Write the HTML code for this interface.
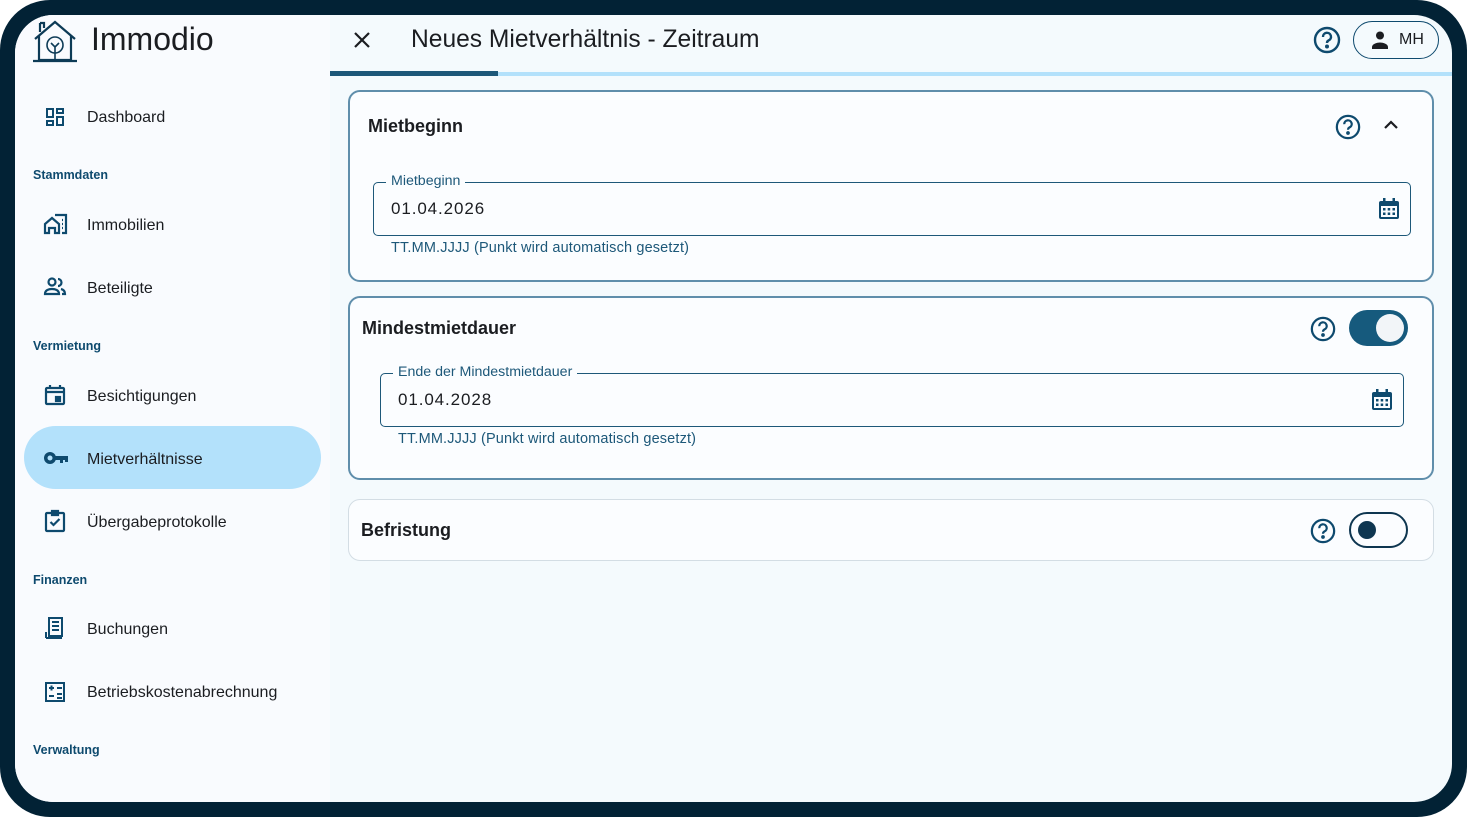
<!DOCTYPE html>
<html><head><meta charset="utf-8"><style>
*{box-sizing:border-box;margin:0;padding:0}
body{width:1467px;height:817px;background:#fff;font-family:"Liberation Sans",Arial,sans-serif;overflow:hidden;position:relative}
.frame{position:absolute;left:0;top:0;width:1467px;height:817px;background:#022235;border-radius:50px}
.screen{position:absolute;left:15px;top:15px;width:1437px;height:787px;border-radius:38px;overflow:hidden;background:#f4fafd}
.side{position:absolute;left:0;top:0;width:315px;height:787px;background:#f9fbfe}
.abs{position:absolute}
.nav{position:absolute;left:72px;font-size:16px;color:#1b1d21;margin-top:2px}
.sec{position:absolute;left:18px;font-size:12.5px;font-weight:bold;color:#0e4a6e}
.ic{position:absolute;left:28px}
.card{position:absolute;left:333px;width:1086px;border:2px solid #5f8eab;border-radius:12px;background:#fbfdff}
.h{position:absolute;font-size:18px;font-weight:bold;color:#1b1d21}
.field{position:absolute;border:1.5px solid #1d5879;border-radius:5px;height:54px}
.field .lab{position:absolute;top:-10px;left:12px;background:#fbfdff;padding:0 5px;font-size:14.2px;color:#1d5879}
.field .val{position:absolute;left:17px;top:16px;font-size:17px;color:#1b1d21;letter-spacing:.9px}
.hint{position:absolute;font-size:14.5px;color:#1d5879;letter-spacing:.15px}
</style></head><body>
<div class="frame"></div>
<div class="screen">
 <div class="side">
  <svg class="abs" style="left:16px;top:2px" width="48" height="46" viewBox="0 0 48 46" fill="none" stroke="#0d3b56" stroke-width="2.2">
   <path d="M4 22 L24 5 L44 22"/><path d="M9 6v9"/><path d="M9 6h4v5"/><path d="M8 19v24h32V19"/><path d="M2 44h44"/>
   <circle cx="24" cy="28" r="8" stroke-width="1.6"/><path d="M24 44V30M20 26l4 4 4-4" stroke-width="1.6"/>
  </svg>
  <div class="abs" style="left:76px;top:6px;font-size:32px;color:#1b1d21">Immodio</div>

  <svg class="ic" style="top:90px" width="24" height="24" viewBox="0 0 24 24" fill="#0e4a6e"><path d="M3 3h8v10H3zm2 2v6h4V5zm8-2h8v6h-8zm2 2v2h4V5zM13 11h8v10h-8zm2 2v6h4v-6zM3 15h8v6H3zm2 2v2h4v-2z"/></svg>
  <div class="nav" style="top:92px">Dashboard</div>
  <div class="sec" style="top:153px">Stammdaten</div>
  <svg class="ic" style="top:197px" width="26" height="24" viewBox="0 0 26 24" fill="none" stroke="#0e4a6e" stroke-width="2.2"><path d="M2 21V12l7-6 7 6v9h-4v-5H6v5z"/><path d="M12 3h11v18h-4"/><path d="M19 8h1M19 12h1M19 16h1"/></svg>
  <div class="nav" style="top:200px">Immobilien</div>
  <svg class="ic" style="top:261px" width="24" height="22" viewBox="0 0 24 22" fill="none" stroke="#0e4a6e" stroke-width="2.2"><circle cx="9" cy="6" r="3.5"/><path d="M2 18c0-4 4-5 7-5s7 1 7 5z"/><path d="M15 3a3.5 3.5 0 0 1 0 7M18 13c2 .5 4 2 4 5h-3"/></svg>
  <div class="nav" style="top:263px">Beteiligte</div>
  <div class="sec" style="top:324px">Vermietung</div>
  <svg class="ic" style="top:368px" width="24" height="24" viewBox="0 0 24 24" fill="none" stroke="#0e4a6e" stroke-width="2.2"><rect x="3" y="5" width="18" height="16" rx="1"/><path d="M3 9h18M7 2v4M17 2v4"/><rect x="13" y="14" width="4" height="4" fill="#0e4a6e"/></svg>
  <div class="nav" style="top:371px">Besichtigungen</div>
  <div class="abs" style="left:9px;top:411px;width:297px;height:63px;border-radius:32px;background:#b3e1fb"></div>
  <svg class="ic" style="top:434px" width="26" height="18" viewBox="0 0 26 18" fill="#0e4a6e"><circle cx="7" cy="9" r="6"/><circle cx="7" cy="9" r="2.5" fill="#b3e1fb"/><rect x="11" y="7" width="14" height="4"/><rect x="17" y="9" width="3" height="5"/><rect x="22" y="9" width="3" height="4"/></svg>
  <div class="nav" style="top:434px">Mietverhältnisse</div>
  <svg class="ic" style="top:494px" width="24" height="24" viewBox="0 0 24 24" fill="none" stroke="#0e4a6e" stroke-width="2.2"><rect x="3" y="4" width="18" height="18" rx="1"/><path d="M9 2h6v4H9z" fill="#0e4a6e"/><path d="M7.5 13l3 3 6-6"/></svg>
  <div class="nav" style="top:497px">Übergabeprotokolle</div>
  <div class="sec" style="top:558px">Finanzen</div>
  <svg class="ic" style="top:601px" width="24" height="24" viewBox="0 0 24 24" fill="none" stroke="#0e4a6e" stroke-width="2"><path d="M6 2h13v18H6z"/><path d="M3 22h16M3 16v6M9 6h7M9 10h7M9 14h7"/></svg>
  <div class="nav" style="top:604px">Buchungen</div>
  <svg class="ic" style="top:665px" width="24" height="24" viewBox="0 0 24 24" fill="none" stroke="#0e4a6e" stroke-width="2"><rect x="3" y="3" width="18" height="18"/><path d="M6 8h5M8.5 5.5v5M14 8h5M6 16h5M14 14h5M14 18h5"/></svg>
  <div class="nav" style="top:667px">Betriebskostenabrechnung</div>
  <div class="sec" style="top:728px">Verwaltung</div>
 </div>

 <svg class="abs" style="left:337px;top:15px" width="20" height="20" viewBox="0 0 20 20" stroke="#1b1d21" stroke-width="2.2"><path d="M3 3l14 14M17 3L3 17"/></svg>
 <div class="abs" style="left:396px;top:11px;font-size:24.6px;color:#1b1d21">Neues Mietverhältnis - Zeitraum</div>
 <svg class="abs" style="left:1298px;top:11px" width="28" height="28" viewBox="0 0 28 28" fill="none" stroke="#0e4a6e" stroke-width="2.4"><circle cx="14" cy="14" r="12"/><path d="M10 11a4 4 0 1 1 5.5 3.5c-1 .5-1.5 1.2-1.5 2.5"/><circle cx="14" cy="20.5" r=".8" fill="#0e4a6e"/></svg>
 <div class="abs" style="left:1338px;top:6px;width:86px;height:38px;border:1.5px solid #0e4a6e;border-radius:19px"></div>
 <svg class="abs" style="left:1355px;top:15px" width="20" height="20" viewBox="0 0 20 20" fill="#1b1d21"><circle cx="10" cy="5.5" r="4"/><path d="M2 19v-2c0-3 5-4.5 8-4.5s8 1.5 8 4.5v2z"/></svg>
 <div class="abs" style="left:1384px;top:16px;font-size:16px;color:#1b1d21">MH</div>
 <div class="abs" style="left:315px;top:57px;width:1122px;height:4px;background:#b3e1fb"></div>
 <div class="abs" style="left:315px;top:56px;width:168px;height:5px;background:#1d5879"></div>

 <div class="card" style="top:75px;height:192px">
  <div class="h" style="left:18px;top:24px">Mietbeginn</div>
  <svg class="abs" style="left:985px;top:22px" width="26" height="26" viewBox="0 0 28 28" fill="none" stroke="#0e4a6e" stroke-width="2.4"><circle cx="14" cy="14" r="12"/><path d="M10 11a4 4 0 1 1 5.5 3.5c-1 .5-1.5 1.2-1.5 2.5"/><circle cx="14" cy="20.5" r=".8" fill="#0e4a6e"/></svg>
  <svg class="abs" style="left:1034px;top:28px" width="14" height="10" viewBox="0 0 14 10" fill="none" stroke="#1b1d21" stroke-width="2.2"><path d="M1 8l6-6 6 6"/></svg>
  <div class="field" style="left:23px;top:90px;width:1038px"><span class="lab">Mietbeginn</span><span class="val">01.04.2026</span>
   <svg class="abs" style="right:10px;top:15px" width="22" height="22" viewBox="0 0 22 22" fill="#0e4a6e"><rect x="1" y="3" width="20" height="18" rx="2"/><rect x="5" y="0" width="2.5" height="5"/><rect x="14.5" y="0" width="2.5" height="5"/><rect x="3" y="8" width="16" height="11" fill="#fbfdff"/><g><rect x="5" y="10" width="2.5" height="2.5"/><rect x="9.7" y="10" width="2.5" height="2.5"/><rect x="14.5" y="10" width="2.5" height="2.5"/><rect x="5" y="14.5" width="2.5" height="2.5"/><rect x="9.7" y="14.5" width="2.5" height="2.5"/><rect x="14.5" y="14.5" width="2.5" height="2.5"/></g></svg>
  </div>
  <div class="hint" style="left:41px;top:148px">TT.MM.JJJJ (Punkt wird automatisch gesetzt)</div>
 </div>

 <div class="card" style="top:281px;height:184px">
  <div class="h" style="left:12px;top:20px">Mindestmietdauer</div>
  <svg class="abs" style="left:960px;top:18px" width="26" height="26" viewBox="0 0 28 28" fill="none" stroke="#0e4a6e" stroke-width="2.4"><circle cx="14" cy="14" r="12"/><path d="M10 11a4 4 0 1 1 5.5 3.5c-1 .5-1.5 1.2-1.5 2.5"/><circle cx="14" cy="20.5" r=".8" fill="#0e4a6e"/></svg>
  <div class="abs" style="left:999px;top:12px;width:59px;height:36px;border-radius:18px;background:#165a7d"></div>
  <div class="abs" style="left:1026px;top:16px;width:28px;height:28px;border-radius:50%;background:#f2f5f8"></div>
  <div class="field" style="left:30px;top:75px;width:1024px"><span class="lab">Ende der Mindestmietdauer</span><span class="val">01.04.2028</span>
   <svg class="abs" style="right:10px;top:15px" width="22" height="22" viewBox="0 0 22 22" fill="#0e4a6e"><rect x="1" y="3" width="20" height="18" rx="2"/><rect x="5" y="0" width="2.5" height="5"/><rect x="14.5" y="0" width="2.5" height="5"/><rect x="3" y="8" width="16" height="11" fill="#fbfdff"/><rect x="5" y="10" width="2.5" height="2.5"/><rect x="9.7" y="10" width="2.5" height="2.5"/><rect x="14.5" y="10" width="2.5" height="2.5"/><rect x="5" y="14.5" width="2.5" height="2.5"/><rect x="9.7" y="14.5" width="2.5" height="2.5"/><rect x="14.5" y="14.5" width="2.5" height="2.5"/></svg>
  </div>
  <div class="hint" style="left:48px;top:133px">TT.MM.JJJJ (Punkt wird automatisch gesetzt)</div>
 </div>

 <div class="card" style="top:484px;height:62px;border:1.5px solid #d3dde4">
  <div class="h" style="left:12px;top:20px">Befristung</div>
  <svg class="abs" style="left:961px;top:18px" width="26" height="26" viewBox="0 0 28 28" fill="none" stroke="#0e4a6e" stroke-width="2.4"><circle cx="14" cy="14" r="12"/><path d="M10 11a4 4 0 1 1 5.5 3.5c-1 .5-1.5 1.2-1.5 2.5"/><circle cx="14" cy="20.5" r=".8" fill="#0e4a6e"/></svg>
  <div class="abs" style="left:1000px;top:12px;width:59px;height:36px;border-radius:18px;border:2.5px solid #0e3650"></div>
  <div class="abs" style="left:1009px;top:21px;width:18px;height:18px;border-radius:50%;background:#0e3650"></div>
 </div>
</div>
</body></html>
